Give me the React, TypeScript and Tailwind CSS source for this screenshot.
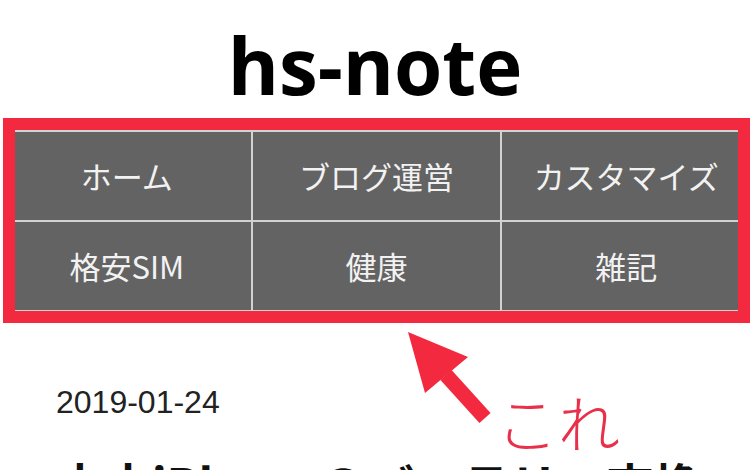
const menu = ["ホーム", "ブログ運営", "カスタマイズ", "格安SIM", "健康", "雑記"];

export default function App() {
  return (
    <div className="relative w-[750px] h-[470px] overflow-hidden bg-white font-['Noto_Sans_CJK_JP',sans-serif]">
      <h1 className="pt-[26px] text-center text-[78px] leading-none font-bold text-black font-['Open_Sans','Noto_Sans_CJK_JP',sans-serif]">
        hs-note
      </h1>

      <nav className="ml-[3px] mt-[26px] grid grid-cols-3 gap-[2px] bg-[#d2d2d2] py-[2px]">
        {menu.map((item) => (
          <div
            key={item}
            className="flex h-[88px] items-center justify-center bg-[#636363] text-[31px] text-[#f2f2f2]"
          >
            {item}
          </div>
        ))}
      </nav>

      <div className="pl-[56px] pt-[74px]">
        <div className="text-[32px] leading-none text-[#222] font-['Liberation_Sans',sans-serif]">
          2019-01-24
        </div>
        <h2 className="mt-[41px] whitespace-nowrap text-[48px] leading-none font-bold text-[#111]">
          中古iPhoneのバッテリー交換
        </h2>
      </div>

      {/* annotation overlay */}
      <div className="pointer-events-none absolute left-[3px] top-[118px] h-[205px] w-[747px] border-[12px] border-[#f2293f]" />
      <svg
        className="pointer-events-none absolute left-[400px] top-[325px]"
        width="100"
        height="100"
        viewBox="0 0 100 100"
      >
        <polygon points="8,7 68,32 25,68" fill="#f2293f" />
        <line x1="46" y1="50" x2="85" y2="93" stroke="#f2293f" strokeWidth="15" />
      </svg>
      <div className="pointer-events-none absolute left-[496px] top-[390px] text-[62px] leading-none font-light text-[#e8304a]">
        これ
      </div>
    </div>
  );
}
